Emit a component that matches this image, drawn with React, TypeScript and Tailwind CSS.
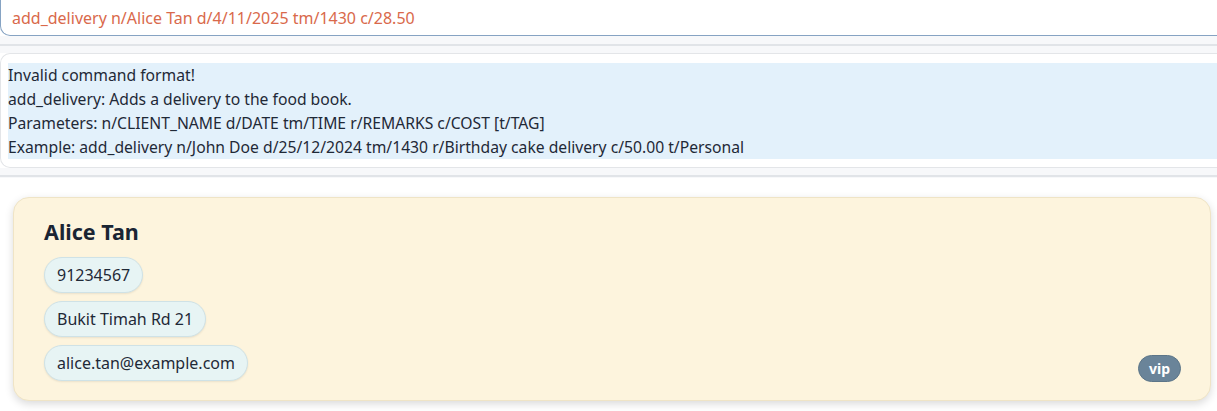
import React from "react";

export default function App() {
  const font = { fontFamily: '"Noto Sans", "Open Sans", sans-serif' };
  return (
    <div className="w-[1217px] h-[411px] bg-white overflow-hidden flex flex-col" style={font}>
      {/* command box */}
      <div className="h-[34px] bg-white border border-[#86a3c3] border-r-0 rounded-l-[10px] -mt-[10px] pt-[10px] box-content flex items-center pl-[11px]">
        <span className="text-[16px] text-[#d9694b]">add_delivery n/Alice Tan d/4/11/2025 tm/1430 c/28.50</span>
      </div>
      {/* separator band */}
      <div className="h-[17px] bg-[#f7f8fa] flex flex-col justify-center">
        <div className="h-[2px] bg-[#e1e4e8]" />
      </div>
      {/* result box */}
      <div className="h-[115px] bg-white border border-[#e3e5e8] border-r-0 rounded-l-[10px] pt-[9px] pl-[7px]">
        <div className="bg-[#e3f1fb] h-[96px] text-[15.7px] leading-[24px] text-[#1f2937]">
          <div>Invalid command format!</div>
          <div>add_delivery: Adds a delivery to the food book.</div>
          <div>Parameters: n/CLIENT_NAME d/DATE tm/TIME r/REMARKS c/COST [t/TAG]</div>
          <div>Example: add_delivery n/John Doe d/25/12/2024 tm/1430 r/Birthday cake delivery c/50.00 t/Personal</div>
        </div>
      </div>
      <div className="h-[10px] bg-[#f7f8fa] flex flex-col justify-end">
        <div className="h-[2px] bg-[#e1e4e8] mb-[1px]" />
      </div>
      {/* card area */}
      <div className="flex-1 bg-white pt-[19px] pl-[13px] pr-[6px]">
        <div className="h-[204px] bg-[#fdf4dd] border border-[#efe4c6] rounded-[16px] shadow-[0_3px_8px_rgba(0,0,0,0.15)] pl-[30px] pr-[29px] pt-[20px] flex flex-col relative">
          <div className="text-[21.5px] font-bold text-[#1a2433] leading-[28px]">Alice Tan</div>
          <div className="flex flex-col items-start gap-[8px] mt-[11px]">
            {["91234567", "Bukit Timah Rd 21", "alice.tan@example.com"].map((t) => (
              <div
                key={t}
                className="h-[36px] px-[12px] rounded-full bg-[#e7f4f4] border border-[#cfe2e6] shadow-[0_1px_2px_rgba(0,0,0,0.08)] flex items-center text-[16px] text-[#1f2937]"
              >
                {t}
              </div>
            ))}
          </div>
          <div className="absolute right-[29px] bottom-[18px] h-[27px] px-[10px] rounded-full bg-[#6a8499] border border-[#5c7588] text-white text-[14px] font-bold flex items-center">
            vip
          </div>
        </div>
      </div>
    </div>
  );
}
